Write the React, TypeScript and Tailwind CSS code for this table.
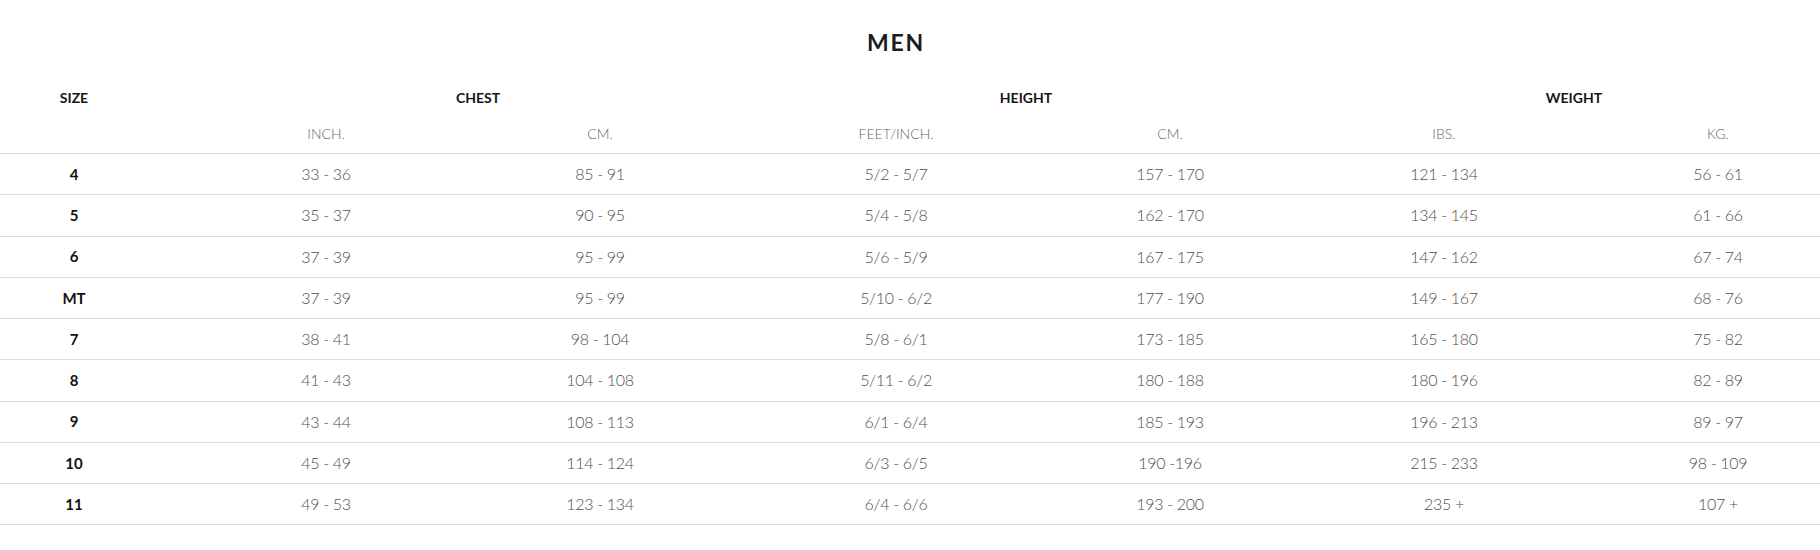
const rows = [
  { size: '4', inch: '33 - 36', cm: '85 - 91', feet: '5/2 - 5/7', hcm: '157 - 170', lbs: '121 - 134', kg: '56 - 61' },
  { size: '5', inch: '35 - 37', cm: '90 - 95', feet: '5/4 - 5/8', hcm: '162 - 170', lbs: '134 - 145', kg: '61 - 66' },
  { size: '6', inch: '37 - 39', cm: '95 - 99', feet: '5/6 - 5/9', hcm: '167 - 175', lbs: '147 - 162', kg: '67 - 74' },
  { size: 'MT', inch: '37 - 39', cm: '95 - 99', feet: '5/10 - 6/2', hcm: '177 - 190', lbs: '149 - 167', kg: '68 - 76' },
  { size: '7', inch: '38 - 41', cm: '98 - 104', feet: '5/8 - 6/1', hcm: '173 - 185', lbs: '165 - 180', kg: '75 - 82' },
  { size: '8', inch: '41 - 43', cm: '104 - 108', feet: '5/11 - 6/2', hcm: '180 - 188', lbs: '180 - 196', kg: '82 - 89' },
  { size: '9', inch: '43 - 44', cm: '108 - 113', feet: '6/1 - 6/4', hcm: '185 - 193', lbs: '196 - 213', kg: '89 - 97' },
  { size: '10', inch: '45 - 49', cm: '114 - 124', feet: '6/3 - 6/5', hcm: '190 -196', lbs: '215 - 233', kg: '98 - 109' },
  { size: '11', inch: '49 - 53', cm: '123 - 134', feet: '6/4 - 6/6', hcm: '193 - 200', lbs: '235 +', kg: '107 +' },
];

const cols = 'grid grid-cols-[148px_356px_192px_400px_148px_400px_148px]';

export default function App() {
  return (
    <div className="min-h-screen bg-white font-['Lato','Liberation_Sans',sans-serif]">
      <div className="h-[84px] pr-[28px] flex items-center justify-center">
        <h1 className="text-[23px] font-bold tracking-[0.08em] text-[#1c1c1c] leading-none">MEN</h1>
      </div>

      <div className={`${cols} h-[26px] items-center text-[14px] font-bold text-[#151515]`}>
        <div className="text-center">SIZE</div>
        <div className="col-span-2 pl-[112px] text-center">CHEST</div>
        <div className="col-span-2 pl-[112px] text-center">HEIGHT</div>
        <div className="col-span-2 pl-[112px] text-center">WEIGHT</div>
      </div>

      <div className="border-b border-[#dcdcdc]">
        <div className={`${cols} h-[43px] pt-[3px] items-center text-[14px] font-light text-[#666]`}>
          <div />
          <div className="text-center">INCH.</div>
          <div className="text-center">CM.</div>
          <div className="text-center">FEET/INCH.</div>
          <div className="text-center">CM.</div>
          <div className="text-center">IBS.</div>
          <div className="text-center">KG.</div>
        </div>
      </div>

      {rows.map(r => (
        <div key={r.size} className="border-b border-[#dcdcdc]">
          <div className={`${cols} h-[40.25px] items-center text-[16px] font-light tracking-[-0.02em] text-[#4f4f4f]`}>
            <div className="text-center text-[15px] font-bold tracking-normal text-[#111]">{r.size}</div>
            <div className="text-center">{r.inch}</div>
            <div className="text-center">{r.cm}</div>
            <div className="text-center">{r.feet}</div>
            <div className="text-center">{r.hcm}</div>
            <div className="text-center">{r.lbs}</div>
            <div className="text-center">{r.kg}</div>
          </div>
        </div>
      ))}
    </div>
  );
}
